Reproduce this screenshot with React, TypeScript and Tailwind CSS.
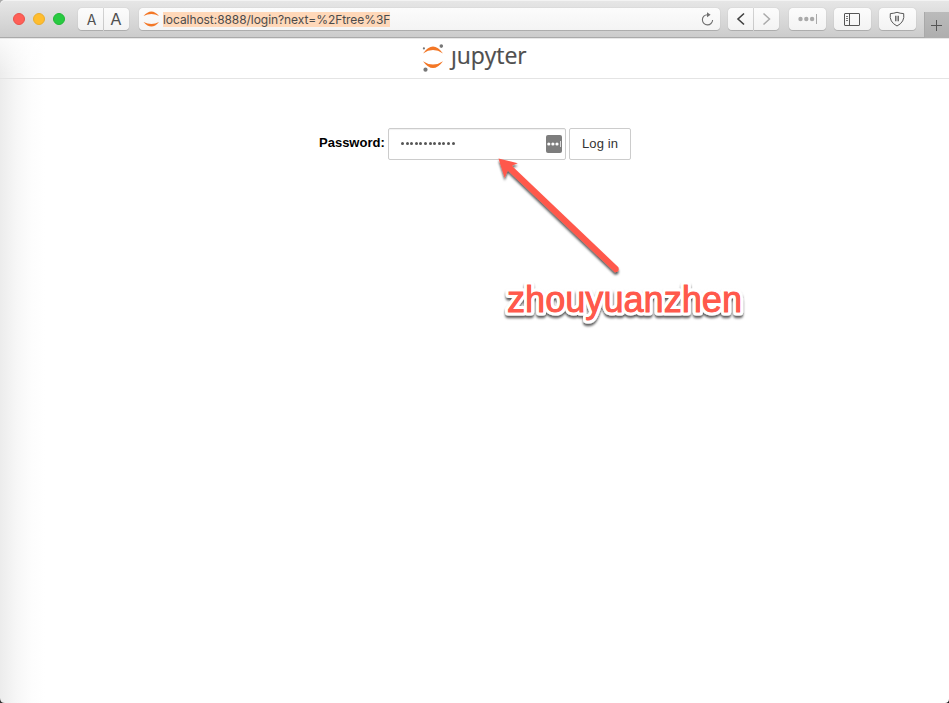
import type { ReactNode } from 'react';

function ToolButton({ children, className = '' }: { children: ReactNode; className?: string }) {
  return (
    <div className={`flex h-[22px] items-center justify-center bg-gradient-to-b from-[#fcfcfc] to-[#f3f3f3] shadow-[0_0_1px_rgba(0,0,0,0.25),0_1px_0_rgba(0,0,0,0.14)] ${className}`}>
      {children}
    </div>
  );
}

function Toolbar() {
  return (
    <header className="flex h-[39px] shrink-0 border-b border-[#e8e8e8] bg-[#aaaaaa]">
      <div className="flex h-[37px] w-full items-start rounded-tl-[5px] bg-gradient-to-b from-[#e7e7e7] to-[#cccccc] shadow-[inset_0_1px_0_#f3f3f3]">
        <div className="ml-[13px] mt-[13px] flex gap-2">
          <span className="size-3 rounded-full border border-[#e9524a] bg-[#ff5f57]" />
          <span className="size-3 rounded-full border border-[#e9ae2d] bg-[#ffbd2e]" />
          <span className="size-3 rounded-full border border-[#20b835] bg-[#28ca41]" />
        </div>
        <div className="ml-[13px] mt-2 flex gap-px font-['Inter','Roboto',sans-serif] text-[#505050]">
          <ToolButton className="w-[25px] rounded-l-[4px] pl-[2px] pt-px text-[14px]">A</ToolButton>
          <ToolButton className="w-[25px] rounded-r-[4px] pr-px pt-px text-[16.5px]">A</ToolButton>
        </div>
        <div className="ml-[10px] mt-2 flex h-[22px] w-[581px] items-center rounded-[4px] bg-gradient-to-b from-[#fcfcfc] to-[#f4f4f4] pl-1 shadow-[0_0_1px_rgba(0,0,0,0.25),0_1px_0_rgba(0,0,0,0.14)]">
          <svg width="17" height="16" viewBox="0 0 17 16" fill="#f37726">
            <path d="M.5 5.1Q8.5-4 16 5.1Q8.5 .8 .5 5.1ZM.5 10.9Q8.5 20 16 10.9Q8.5 15.2 .5 10.9Z" />
          </svg>
          <span className="ml-[3px] h-[15px] w-[227px] whitespace-nowrap bg-[#ffd8b9] font-['Inter','Roboto',sans-serif] text-[12px] leading-[16px] tracking-[-0.06px] text-[#4b4b4b]">localhost:8888/login?next=%2Ftree%3F</span>
          <svg className="ml-auto mr-[6px]" width="13" height="15" viewBox="0 0 13 15" fill="none" stroke="#707070" strokeWidth="1.1">
            <path d="M7 2.7H6.4A5.1 5.1 0 1 0 11.6 8" />
            <path d="M6 0.3L9.6 2.8L6 5.3Z" fill="#707070" stroke="none" />
          </svg>
        </div>
        <div className="ml-2 mt-2 flex gap-px">
          <ToolButton className="w-[25px] rounded-l-[4px]">
            <svg width="10" height="14" viewBox="0 0 10 14" fill="none" stroke="#404040" strokeWidth="1.6"><path d="M8 1.5L2 7L8 12.5" /></svg>
          </ToolButton>
          <ToolButton className="w-[25px] rounded-r-[4px]">
            <svg width="10" height="14" viewBox="0 0 10 14" fill="none" stroke="#aaaaaa" strokeWidth="1.5"><path d="M1.5 1.5L7.5 7L1.5 12.5" /></svg>
          </ToolButton>
        </div>
        <ToolButton className="ml-[10px] mt-2 w-[37px] rounded-[4px]">
          <svg width="20" height="12" viewBox="0 0 20 12" fill="#aaaaaa"><circle cx="2.5" cy="6" r="2.2" /><circle cx="8.3" cy="6" r="2.2" /><circle cx="14.1" cy="6" r="2.2" /><path d="M18 1h1v10h-1z" /></svg>
        </ToolButton>
        <ToolButton className="ml-2 mt-2 w-[37px] rounded-[4px] pr-px">
          <svg width="16" height="13" viewBox="0 0 16 13" fill="none" stroke="#555555"><rect x=".5" y=".5" width="15" height="12" rx=".5" /><path d="M5.5 .5v12" /><path d="M2 3.5h2M2 5.5h2M2 7.5h2" strokeWidth=".8" /></svg>
        </ToolButton>
        <ToolButton className="ml-2 mt-2 w-[37px] rounded-[4px] pr-px">
          <svg width="16" height="16" viewBox="0 0 16 16" fill="none" stroke="#555555"><path d="M8 1.3Q11 2.4 14.7 2.6Q16 11 8 15Q0 11 1.3 2.6Q5 2.4 8 1.3Z" /><path d="M6.8 4.8v5.4M9.2 4.8v5.4" strokeWidth="1.3" /></svg>
        </ToolButton>
        <div className="ml-auto mt-3 flex h-[26px] w-[25px] items-center justify-center border-l border-[#a9a9a9] bg-gradient-to-b from-[#bbbbbb] to-[#aeaeae] pr-px">
          <svg width="13" height="13" viewBox="0 0 13 13" stroke="#555555"><path d="M6.5 1v11M1 6.5h11" /></svg>
        </div>
      </div>
    </header>
  );
}

export default function App() {
  return (
    <div className="relative flex h-[703px] w-[949px] flex-col overflow-hidden bg-white font-['Liberation_Sans',Arial,sans-serif]">
      <Toolbar />
      <main className="flex flex-1 flex-col bg-[linear-gradient(to_bottom,rgba(255,255,255,0.7)_0px,rgba(255,255,255,0)_35px),linear-gradient(to_right,#ececec_0px,#f7f7f7_17px,#fdfdfd_32px,#ffffff_45px)]">
        <div className="flex h-10 items-start border-b border-[#e4e4e4] pl-[421px]">
          <svg className="mt-1" width="24" height="30" viewBox="0 0 24 30">
            <g fill="#f37726"><path d="M2 10.5Q12-3.3 22 10.5Q12 3.7 2 10.5ZM2 18.2Q12 32 22 18.2Q12 25 2 18.2Z" /></g>
            <g fill="#777777"><circle cx="20.3" cy="3.1" r="1.8" /><circle cx="2.9" cy="5.4" r="1.1" /><circle cx="4.5" cy="26.7" r="2.1" /></g>
          </svg>
          <span className="ml-[6px] font-['Open_Sans','Noto_Sans',sans-serif] text-[23px] leading-[32px] tracking-[-0.05px] text-[#4e4e4e] [-webkit-text-stroke:0.2px_#4e4e4e] [clip-path:polygon(8px_0,100%_0,100%_100%,-5px_100%,-5px_11px,8px_11px)]">jupyter</span>
        </div>
        <form className="mt-[49px] flex items-start pl-[319px] text-black" onSubmit={(event) => event.preventDefault()}>
          <label htmlFor="password" className="mt-[5px] w-[69px] whitespace-nowrap text-[13px] font-bold leading-[20px]">Password:</label>
          <div id="password" className="flex h-8 w-[178px] items-center rounded-[2px] border border-[#cccccc] bg-white pl-[12px] pr-[3px] shadow-[inset_0_1px_1px_rgba(0,0,0,0.06)]">
            <div className="mb-[2px] flex gap-[1.6px]">
              {Array.from({ length: 12 }, (_, index) => <span key={index} className="size-[3px] rounded-full bg-[#555555]" />)}
            </div>
            <svg className="ml-auto" width="16" height="18" viewBox="0 0 16 18"><rect width="16" height="18" rx="2" fill="#7d7d7d" /><g fill="#ffffff"><circle cx="2.8" cy="9" r="1.6" /><circle cx="6.9" cy="9" r="1.6" /><circle cx="11" cy="9" r="1.6" /><path d="M14 6h.7v6H14z" /></g></svg>
          </div>
          <button className="ml-[3px] h-8 w-[62px] rounded-[2px] border border-[#cccccc] bg-white text-[13px] leading-[18px] tracking-[0.1px] text-[#333333]">Log in</button>
        </form>
      </main>
      <svg className="pointer-events-none absolute left-[480px] top-[145px]" width="285" height="190" viewBox="0 0 285 190">
        <defs>
          <filter id="shadow" x="-10%" y="-20%" width="120%" height="150%"><feDropShadow dx="0" dy="2.5" stdDeviation="1.1" floodColor="#000000" floodOpacity=".65" /></filter>
        </defs>
        <g filter="url(#shadow)">
          <path d="M18.5 13.5L37.8 18.2L31.8 20.8L138.4 122.2Q140 127.3 134.8 127.2L27.8 25.5L24.7 33Z" fill="#ff594c" />
        </g>
        <text x="27" y="167" textLength="235" lengthAdjust="spacingAndGlyphs" fontFamily="Liberation Sans, Arial, sans-serif" fontSize="37" fill="#ff594c" stroke="#ffffff" strokeWidth="7" strokeLinejoin="round" paintOrder="stroke" filter="url(#shadow)">zhouyuanzhen</text>
        <text aria-hidden="true" x="27" y="167" textLength="235" lengthAdjust="spacingAndGlyphs" fontFamily="Liberation Sans, Arial, sans-serif" fontSize="37" fill="#ff594c" stroke="#ff594c" strokeWidth=".8">zhouyuanzhen</text>
      </svg>
      <svg className="absolute bottom-0 left-0" width="5" height="5" viewBox="0 0 5 5"><path d="M0 0Q0 5 5 5H0Z" fill="#333333" /></svg>
      <svg className="absolute bottom-0 right-0" width="4" height="4" viewBox="0 0 4 4"><path d="M4 0Q4 4 0 4H4Z" fill="#111111" /></svg>
    </div>
  );
}
